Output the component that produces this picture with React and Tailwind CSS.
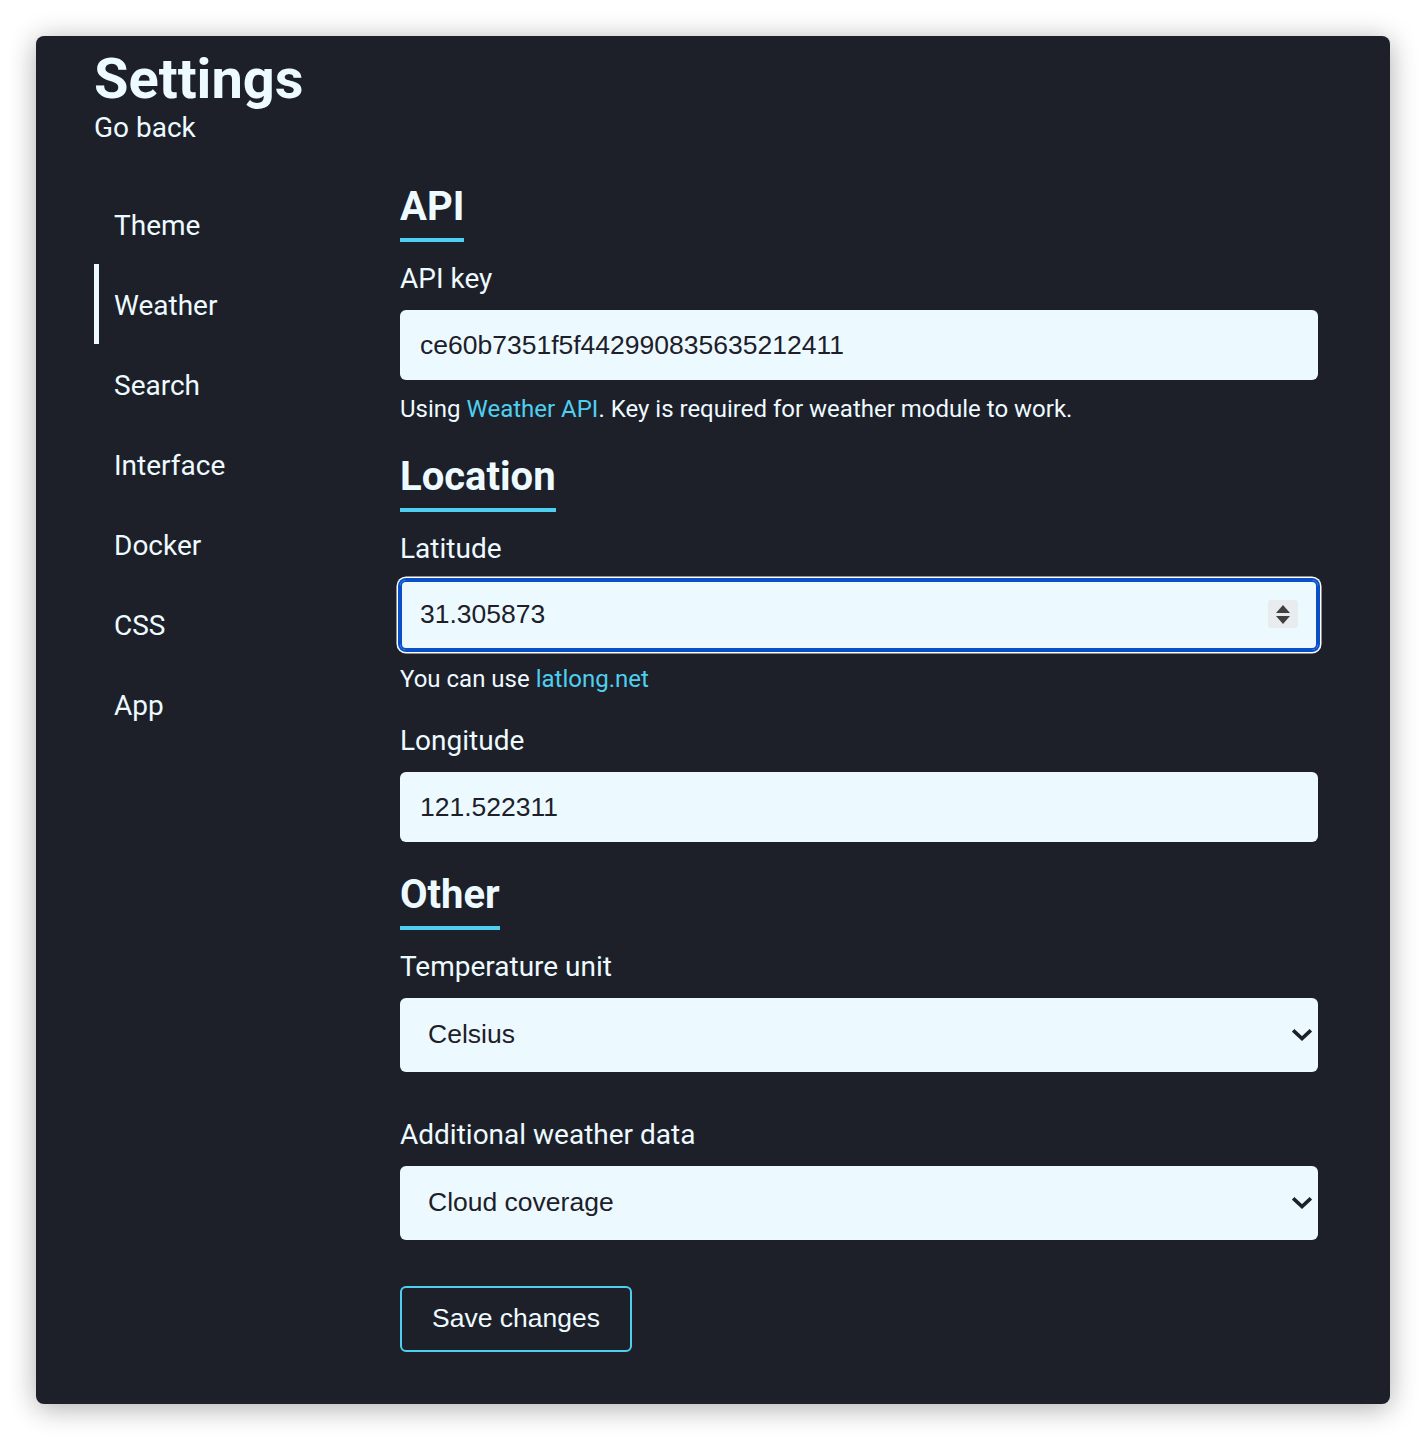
import React from 'react';

const navItems = ['Theme', 'Weather', 'Search', 'Interface', 'Docker', 'CSS', 'App'];

const roboto = { fontFamily: 'Roboto, "Noto Sans", sans-serif' };

const Heading = ({ children, className = '' }) => (
  <h2
    className={`inline-block self-start border-b-4 border-[#4fcff0] pb-[6px] text-[40px] font-bold leading-[50px] text-[#edfaff] ${className}`}
  >
    {children}
  </h2>
);

const Label = ({ children, className = '' }) => (
  <label className={`block text-[28px] leading-[32px] text-[#edfaff] ${className}`}>{children}</label>
);

const Help = ({ children, className = '' }) => (
  <p className={`text-[24px] leading-[30px] text-[#edfaff] ${className}`}>{children}</p>
);

const TextInput = ({ value }) => (
  <input
    type="text"
    defaultValue={value}
    className="mt-[15px] block h-[70px] w-full rounded-[6px] bg-[#ecfaff] px-[20px] font-['Liberation_Sans',Arial,sans-serif] text-[26.5px] text-[#1d2029] outline-none"
  />
);

const Chevron = () => (
  <svg width="20" height="14" viewBox="0 0 20 14" className="pointer-events-none absolute right-[6px] top-1/2 -translate-y-1/2">
    <path d="M2.5 3.5 L10 10.5 L17.5 3.5" fill="none" stroke="#1d2029" strokeWidth="3.6" strokeLinecap="square" />
  </svg>
);

const Select = ({ value, options }) => (
  <div className="relative mt-[15px] h-[74px] w-full">
    <select
      defaultValue={value}
      className="block h-full w-full appearance-none rounded-[6px] bg-[#ecfaff] pl-[28px] font-['Liberation_Sans',Arial,sans-serif] text-[26.5px] text-[#1d2029] outline-none"
    >
      {options.map((o) => (
        <option key={o}>{o}</option>
      ))}
    </select>
    <Chevron />
  </div>
);

const NumberInput = ({ value }) => (
  <div className="relative mt-[15px] h-[70px] w-full rounded-[6px] bg-[#ecfaff] shadow-[inset_0_0_0_2px_#0b4fc7,0_0_0_2px_#0b4fc7,0_0_0_3.5px_#ffffff]">
    <div className="flex h-full items-center px-[20px] font-['Liberation_Sans',Arial,sans-serif] text-[26.5px] text-[#1d2029]">
      {value}
    </div>
    <div className="absolute right-[20px] top-[20px] flex h-[28px] w-[30px] flex-col items-center justify-center gap-[3px] rounded-[3px] bg-[#e9ecee]">
      <svg width="14" height="8" viewBox="0 0 14 8">
        <path d="M7 0 L14 8 L0 8 Z" fill="#404040" />
      </svg>
      <svg width="14" height="8" viewBox="0 0 14 8">
        <path d="M0 0 L14 0 L7 8 Z" fill="#404040" />
      </svg>
    </div>
  </div>
);

export default function App() {
  return (
    <div className="min-h-[1440px] bg-white p-[36px]" style={roboto}>
      <div className="h-[1368px] w-[1354px] rounded-[8px] bg-[#1d2029] pl-[58px] pt-[11px] shadow-[0_4px_28px_rgba(0,0,0,0.33)]">
        <h1 className="text-[56px] font-bold leading-[65px] text-[#edfaff]">Settings</h1>
        <a className="block text-[28px] leading-[32px] text-[#edfaff]">Go back</a>

        <div className="mt-[38px] flex">
          <nav className="mt-[2px] w-[306px] shrink-0">
            {navItems.map((item) => (
              <div
                key={item}
                className={`flex h-[80px] items-center border-l-[5px] pl-[15px] pt-[3px] text-[28px] text-[#edfaff] ${
                  item === 'Weather' ? 'border-[#edfaff]' : 'border-transparent'
                }`}
              >
                {item}
              </div>
            ))}
          </nav>

          <main className="flex w-[918px] flex-col">
            <Heading>API</Heading>
            <Label className="mt-[21px]">API key</Label>
            <TextInput value="ce60b7351f5f442990835635212411" />
            <Help className="mt-[14px]">
              Using <span className="text-[#4fcff0]">Weather API</span>. Key is required for weather module to work.
            </Help>

            <Heading className="mt-[28px]">Location</Heading>
            <Label className="mt-[21px]">Latitude</Label>
            <NumberInput value="31.305873" />
            <Help className="mt-[14px]">
              You can use <span className="text-[#4fcff0]">latlong.net</span>
            </Help>
            <Label className="mt-[31px]">Longitude</Label>
            <TextInput value="121.522311" />

            <Heading className="mt-[28px]">Other</Heading>
            <Label className="mt-[21px]">Temperature unit</Label>
            <Select value="Celsius" options={['Celsius', 'Fahrenheit']} />
            <Label className="mt-[47px]">Additional weather data</Label>
            <Select value="Cloud coverage" options={['Cloud coverage', 'Humidity', 'Pressure']} />

            <button className="mt-[46px] h-[66px] self-start rounded-[6px] border-2 border-[#4fcff0] px-[30px] font-['Liberation_Sans',Arial,sans-serif] text-[26.5px] text-[#edfaff]">
              Save changes
            </button>
          </main>
        </div>
      </div>
    </div>
  );
}
